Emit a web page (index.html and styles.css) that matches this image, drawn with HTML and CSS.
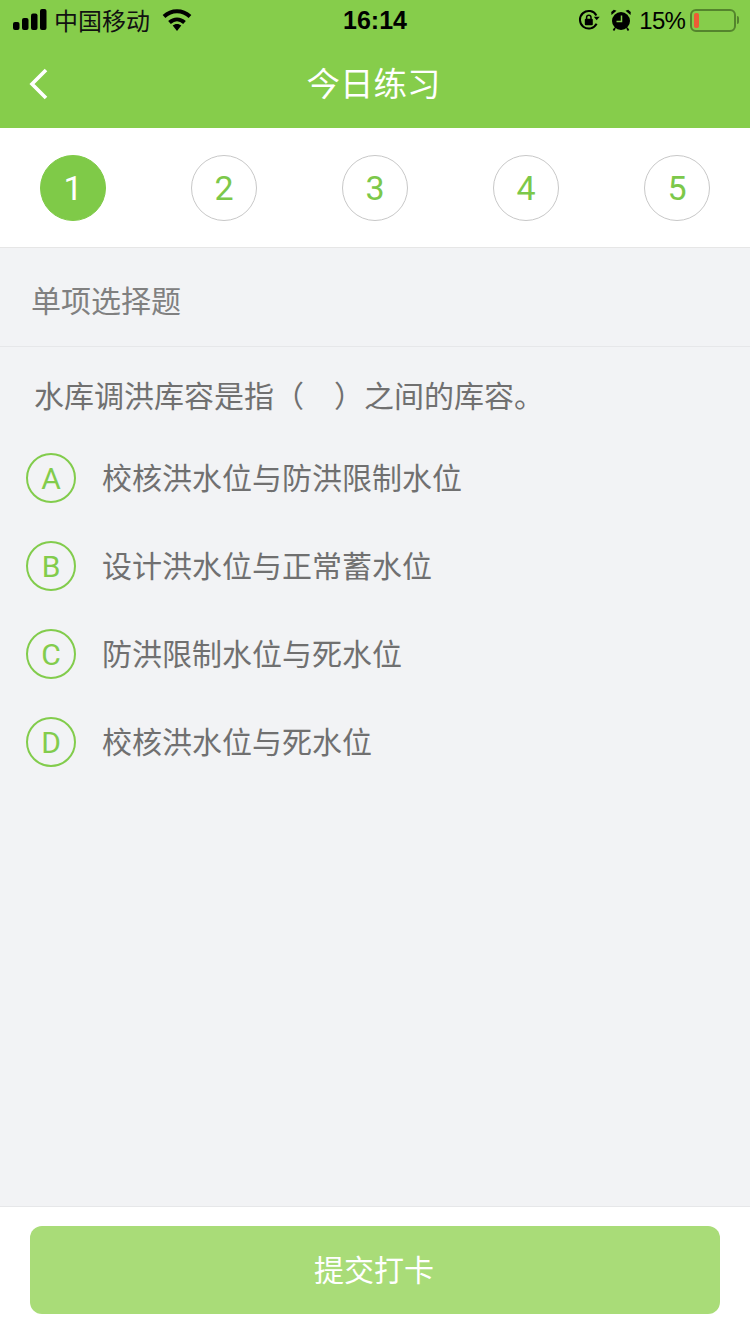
FILE: index.html
```html
<!DOCTYPE html>
<html lang="zh-CN">
<head>
<meta charset="utf-8">
<title>今日练习</title>
<link rel="stylesheet" href="styles.css">
</head>
<body>
<div class="page">
  <header class="header">
    <div class="status">
      <div class="status-left">
        <svg class="signal" width="34" height="22" viewBox="0 0 34 22"><rect x="0" y="13" width="6.500" height="8" rx="2"/><rect x="9" y="9" width="6.500" height="12" rx="2"/><rect x="18" y="4.500" width="6.500" height="16.500" rx="2"/><rect x="27" y="0" width="6.500" height="21" rx="2"/></svg>
        <span class="carrier">中国移动</span>
        <svg class="wifi" width="30" height="22" viewBox="0 0 30 22"><path class="wifi-arc" d="M2 7.500C9.500.500 20.500.500 28 7.500"/><path class="wifi-arc" d="M7.500 13.500c4.500-4 10.500-4 15 0"/><path d="M15 15c-1.700 0-3.200.600-4.300 1.600L15 22l4.300-5.400C18.200 15.600 16.700 15 15 15z"/></svg>
      </div>
      <div class="clock">16:14</div>
      <div class="status-right">
        <svg class="lock" width="22" height="22" viewBox="0 0 22 22"><path d="M18.600 14.800A8.800 8.800 0 1 1 18.400 6.400" fill="none" stroke="#000" stroke-width="2"/><path d="M15.800 7.800h5.900l-3 3.500z"/><rect x="6.800" y="9.800" width="8" height="6.400" rx="1"/><path d="M8.600 10V8.400a2.200 2.200 0 0 1 4.400 0V10" fill="none" stroke="#000" stroke-width="1.500"/></svg>
        <svg class="alarm" width="22" height="22" viewBox="0 0 22 22"><circle cx="11" cy="12" r="9"/><path d="M1.500 6 6.500 1.800 3.800.800 1.200 3zM20.500 6 15.500 1.800 18.200.800 20.800 3z"/><path d="M11.500 6.500v6H6.500" fill="none" stroke="#86cd4b" stroke-width="1.500"/><path d="M5 19 3.500 21.500M17 19l1.500 2.500" stroke="#000" stroke-width="1.800"/></svg>
        <span class="pct">15%</span>
        <div class="battery"><div class="battery-level"></div></div>
        <div class="battery-cap"></div>
      </div>
    </div>
    <nav class="nav">
      <svg class="back" width="22" height="34" viewBox="0 0 22 34"><path d="M18 3 4 17l14 14" fill="none" stroke="#fff" stroke-width="3.600"/></svg>
      <h1 class="title">今日练习</h1>
    </nav>
  </header>

  <div class="steps">
    <div class="step step-active">1</div>
    <div class="step">2</div>
    <div class="step">3</div>
    <div class="step">4</div>
    <div class="step">5</div>
  </div>

  <div class="type">单项选择题</div>

  <main class="main">
    <p class="question">水库调洪库容是指（&emsp;）之间的库容。</p>
    <ul class="options">
      <li class="option"><span class="letter">A</span><span class="text">校核洪水位与防洪限制水位</span></li>
      <li class="option"><span class="letter">B</span><span class="text">设计洪水位与正常蓄水位</span></li>
      <li class="option"><span class="letter">C</span><span class="text">防洪限制水位与死水位</span></li>
      <li class="option"><span class="letter">D</span><span class="text">校核洪水位与死水位</span></li>
    </ul>
  </main>

  <footer class="footer">
    <button class="submit" type="button">提交打卡</button>
  </footer>
</div>
</body>
</html>
```
FILE: styles.css
```css
* { box-sizing: border-box; }
html, body { margin: 0; padding: 0; }
body {
  width: 750px;
  height: 1334px;
  overflow: hidden;
  font-family: "Noto Sans CJK SC", "Liberation Sans", sans-serif;
  background: #f2f3f5;
  color: #707070;
}
.page { display: flex; flex-direction: column; height: 1334px; }

.header { background: #86cd4b; height: 128px; flex: none; }
.status {
  height: 40px;
  padding: 0 11px 0 13px;
  display: flex;
  align-items: center;
  position: relative;
  color: #000;
}
.status svg { fill: #000; display: block; flex: none; }
.status-left { display: flex; align-items: center; }
.carrier { font-size: 24px; line-height: 40px; margin-left: 7px; color: #111; }
.wifi { margin-left: 12px; }
.wifi-arc { fill: none; stroke: #000; stroke-width: 4; }
.clock {
  position: absolute;
  left: 0;
  right: 0;
  top: 0;
  text-align: center;
  font-family: "Liberation Sans", sans-serif;
  font-size: 25px;
  font-weight: 700;
  line-height: 41px;
}
.status-right { margin-left: auto; display: flex; align-items: center; }
.alarm { margin-left: 10px; }
.pct {
  font-family: "Liberation Sans", sans-serif;
  font-size: 24px;
  letter-spacing: -0.8px;
  line-height: 41px;
  margin-left: 7px;
}
.battery {
  width: 46px;
  height: 23px;
  margin-left: 5px;
  border: 2px solid #54842d;
  border-radius: 6px;
  padding: 2px;
}
.battery-level { width: 5px; height: 100%; background: #ee5c36; border-radius: 2px; }
.battery-cap { width: 2px; height: 8px; margin-left: 1px; background: #54842d; border-radius: 0 2px 2px 0; }

.nav { height: 88px; padding: 0 3px 4px 0; display: flex; align-items: center; justify-content: center; position: relative; }
.back { position: absolute; left: 28px; top: 27px; }
.title { margin: 0; color: #fff; font-size: 33.500px; font-weight: 400; margin-top: -1px; }

.steps {
  height: 120px;
  flex: none;
  background: #fff;
  border-bottom: 1px solid #e6e6e6;
  padding: 27px 40px 0;
  display: flex;
  justify-content: space-between;
  align-items: flex-start;
}
.step {
  width: 66px;
  height: 66px;
  border: 1px solid #c8c8c8;
  border-radius: 50%;
  display: flex;
  align-items: center;
  justify-content: center;
  font-family: Roboto, "Liberation Sans", sans-serif;
  font-weight: 400;
  font-size: 34px;
  color: #7cc84a;
}
.step-active { background: #7fca48; border-color: #7fca48; color: #fff; }

.type {
  height: 99px;
  flex: none;
  padding: 0 31px;
  border-bottom: 1px solid #e6e7e9;
  font-size: 30px;
  line-height: 102px;
  color: #808080;
}

.main { flex: 1; padding: 0 26px; }
.question { margin: 0; padding: 22px 0 0 8px; font-size: 30px; line-height: 50px; color: #707070; }
.options { list-style: none; margin: 0; padding: 15px 0 0; }
.option { height: 88px; display: flex; align-items: center; }
.letter {
  width: 50px;
  height: 50px;
  flex: none;
  border: 2px solid #82cc4c;
  border-radius: 50%;
  display: flex;
  align-items: center;
  justify-content: center;
  font-family: Roboto, "Liberation Sans", sans-serif;
  font-weight: 400;
  font-size: 30px;
  color: #82cc4c;
}
.text { margin-left: 26px; font-size: 30px; line-height: 44px; color: #707070; margin-top: -4px; }

.footer {
  height: 128px;
  flex: none;
  background: #fff;
  border-top: 1px solid #e6e7e9;
  padding: 19px 30px 0;
}
.submit {
  display: block;
  width: 100%;
  height: 88px;
  border: 0;
  border-radius: 12px;
  background: #a9dc78;
  color: #fff;
  font-family: inherit;
  font-size: 30px;
  padding: 0 2px 4px 0;
}
```
